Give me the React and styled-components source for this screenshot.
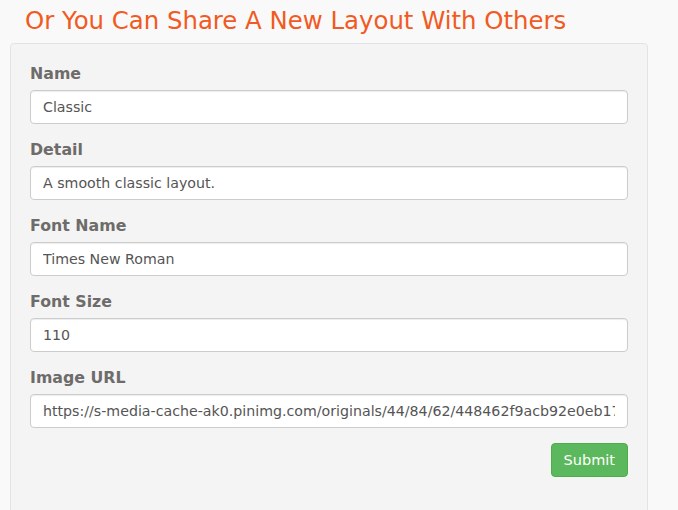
import React from "react";
import styled, { createGlobalStyle } from "styled-components";

const GlobalStyle = createGlobalStyle`
  html, body {
    margin: 0;
    padding: 0;
    background: #f9f9f9;
    font-family: "DejaVu Sans", Verdana, sans-serif;
  }
`;

const Page = styled.div`
  padding: 0 30px 0 10px;
`;

const Title = styled.h2`
  margin: 0;
  padding: 7px 0 0 15px;
  height: 43px;
  box-sizing: border-box;
  font-size: 24.4px;
  font-weight: normal;
  line-height: 28px;
  color: #f15a22;
`;

const Well = styled.form`
  background: #f4f4f4;
  border: 1px solid #e3e3e3;
  border-radius: 4px;
  padding: 19px 19px 30px;
  min-height: 480px;
  box-sizing: border-box;
`;

const Group = styled.div`
  margin-bottom: 15px;
`;

const Label = styled.label`
  display: block;
  font-size: 15.8px;
  font-weight: bold;
  line-height: 22px;
  margin-bottom: 5px;
  color: #6e6c6a;
`;

const Input = styled.input`
  display: block;
  width: 100%;
  height: 34px;
  box-sizing: border-box;
  padding: 6px 12px;
  font-family: "DejaVu Sans", Verdana, sans-serif;
  font-size: 14.2px;
  color: #555;
  background: #fff;
  border: 1px solid #ccc;
  border-radius: 4px;
  box-shadow: inset 0 1px 1px rgba(0, 0, 0, 0.075);
  outline: none;
`;

const Actions = styled.div`
  display: flex;
  justify-content: flex-end;
`;

const Button = styled.button`
  height: 34px;
  padding: 0 12px;
  font-family: "DejaVu Sans", Verdana, sans-serif;
  font-size: 14.5px;
  color: #fff;
  background: #5cb85c;
  border: 1px solid #4cae4c;
  border-radius: 4px;
  cursor: pointer;
`;

const fields = [
  { label: "Name", value: "Classic" },
  { label: "Detail", value: "A smooth classic layout." },
  { label: "Font Name", value: "Times New Roman" },
  { label: "Font Size", value: "110" },
  {
    label: "Image URL",
    value:
      "https://s-media-cache-ak0.pinimg.com/originals/44/84/62/448462f9acb92e0eb17a8a3c3d9d2f11.jpg",
  },
];

export default function App() {
  return (
    <Page>
      <GlobalStyle />
      <Title>Or You Can Share A New Layout With Others</Title>
      <Well onSubmit={(e) => e.preventDefault()}>
        {fields.map((f) => (
          <Group key={f.label}>
            <Label>{f.label}</Label>
            <Input type="text" defaultValue={f.value} />
          </Group>
        ))}
        <Actions>
          <Button type="submit">Submit</Button>
        </Actions>
      </Well>
    </Page>
  );
}
